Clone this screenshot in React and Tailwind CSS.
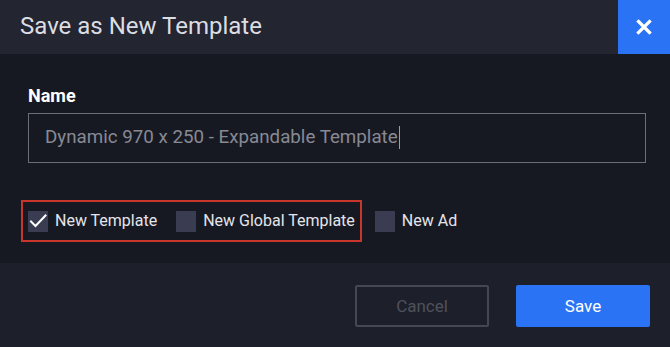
import React from 'react';

const Checkbox = ({ checked, label }) => (
  <label className="flex items-center gap-[7px]">
    <span className="flex h-[21px] w-[20px] items-center justify-center bg-[#3a3c51]">
      {checked && (
        <svg width="20" height="21" viewBox="0 0 20 21" fill="none">
          <path d="M3 10.5l4.5 4.5L17.5 4.5" stroke="#fff" strokeWidth="2" strokeLinecap="square" />
        </svg>
      )}
    </span>
    <span className="text-[16px] text-[#e4e5ea]">{label}</span>
  </label>
);

const App = () => {
  return (
    <div className="flex h-[347px] w-[670px] flex-col bg-[#171922]" style={{ fontFamily: 'Roboto, "Liberation Sans", sans-serif' }}>
      {/* Header */}
      <div className="flex h-[54px] items-stretch justify-between bg-[#232531]">
        <h1 className="flex items-center pl-[20px] pb-[3px] text-[24px] text-[#dcdde2]">Save as New Template</h1>
        <button className="flex w-[52px] items-center justify-center bg-[#2a73f5] pb-[1px]">
          <svg width="16" height="16" viewBox="0 0 16 16">
            <path d="M2.5 2.5l11 11M13.5 2.5l-11 11" stroke="#fff" strokeWidth="3.2" strokeLinecap="square" />
          </svg>
        </button>
      </div>

      {/* Body */}
      <div className="flex h-[209px] flex-col px-[28px] pt-[30px]">
        <div className="text-[18px] leading-[24px] font-bold text-white">Name</div>
        <div className="mt-[5px] flex h-[50px] w-[618px] items-center border border-[#6b6d78] pl-[16px] pb-[2px]">
          <span className="text-[18.75px] text-[#878994]">Dynamic 970 x 250 - Expandable Template</span>
          <span className="ml-[1px] h-[23px] w-[1px] bg-[#9a9ca6]"></span>
        </div>
        <div className="mt-[37px] flex items-center gap-[13px]">
          <div className="-ml-[7px] flex h-[42px] items-center gap-[19px] border-2 border-[#c8352a] px-[5px]">
            <Checkbox checked label="New Template" />
            <Checkbox label="New Global Template" />
          </div>
          <Checkbox label="New Ad" />
        </div>
      </div>

      {/* Footer */}
      <div className="flex flex-1 items-start justify-end gap-[27px] bg-[#1d1f2a] pr-[20px] pt-[22px]">
        <button className="flex h-[42px] w-[134px] items-center justify-center rounded-[2px] border-2 border-[#454751] pt-[2px] text-[17px] text-[#4f525c]">
          Cancel
        </button>
        <button className="flex h-[42px] w-[134px] items-center justify-center rounded-[2px] bg-[#2a73f5] pt-[2px] text-[17px] text-white">
          Save
        </button>
      </div>
    </div>
  );
};

export default App;
